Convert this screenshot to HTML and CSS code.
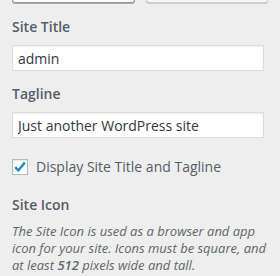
FILE: index.html
```html
<!DOCTYPE html>
<html>
<head>
<meta charset="utf-8">
<link rel="stylesheet" href="styles.css">
</head>
<body>
<div class="panel">
  <div class="buttons">
    <span class="btn btn-primary"></span>
    <span class="btn"></span>
  </div>
  <div class="control">
    <label class="title" for="t1">Site Title</label>
    <input id="t1" class="text" type="text" value="admin">
  </div>
  <div class="control">
    <label class="title" for="t2">Tagline</label>
    <input id="t2" class="text" type="text" value="Just another WordPress site">
  </div>
  <div class="control check-control">
    <span class="checkbox"><svg width="14" height="14" viewBox="0 0 14 14"><path d="M2.2 7.2 L5.4 10.4 L11.8 2.6" fill="none" stroke="#1e8cbe" stroke-width="2.4" stroke-linejoin="miter"/></svg></span>
    <span class="check-label">Display Site Title and Tagline</span>
  </div>
  <div class="control">
    <div class="title">Site Icon</div>
    <p class="desc">The Site Icon is used as a browser and app icon for your site. Icons must be square, and at least <strong>512</strong> pixels wide and tall.</p>
  </div>
</div>
</body>
</html>
```
FILE: styles.css
```css
html, body {
  margin: 0;
  padding: 0;
  background: #eeeeee;
}
body {
  font-family: "Open Sans", "Liberation Sans", sans-serif;
  color: #555d66;
  overflow: hidden;
  height: 276px;
}
.panel {
  padding: 0 12px;
  width: 256px;
}
.buttons {
  display: flex;
  gap: 11px;
  margin-top: -25px;
  margin-bottom: 12px;
}
.btn {
  display: block;
  height: 26px;
  flex: 1;
  background: #f7f7f7;
  border: 1px solid #cccccc;
  border-radius: 3px;
  box-shadow: 0 1px 0 #ccc;
}
.btn-primary {
  border-color: #999;
  background: #fafafa;
  box-shadow: 0 1px 0 #aaa;
}
.control {
  margin-bottom: 11px;
  width: 252px;
}
.title {
  display: block;
  font-size: 14px;
  line-height: 24px;
  font-weight: 600;
  color: #555d66;
  margin-bottom: 6px;
}
.text {
  display: block;
  box-sizing: border-box;
  width: 252px;
  height: 26px;
  margin: 0;
  padding: 0 5px;
  font-family: "Open Sans", "Liberation Sans", sans-serif;
  font-size: 14px;
  color: #32373c;
  background: #fff;
  border: 1px solid #ddd;
  box-shadow: inset 0 1px 2px rgba(0,0,0,.07);
  outline: none;
}
.check-control {
  display: flex;
  align-items: center;
  gap: 8px;
  padding-top: 8px;
  margin-bottom: 16px;
}
.checkbox {
  box-sizing: border-box;
  width: 16px;
  height: 16px;
  border: 1px solid #b4b9be;
  background: #fff;
  box-shadow: inset 0 1px 2px rgba(0,0,0,.1);
  display: flex;
  align-items: center;
  justify-content: center;
}
.checkbox svg {
  display: block;
}
.check-label {
  font-size: 14px;
  line-height: 20px;
  color: #555d66;
}
.desc {
  margin: 0;
  width: 262px;
  font-size: 13px;
  line-height: 17px;
  font-style: italic;
  color: #60666c;
}
.desc strong {
  font-weight: 600;
}
```
